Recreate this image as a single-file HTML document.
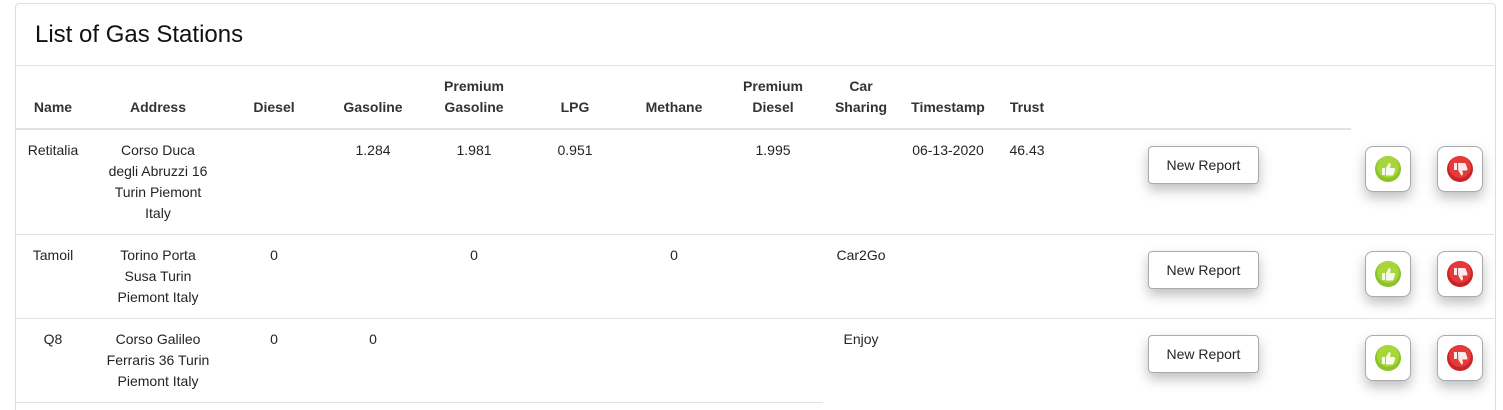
<!DOCTYPE html>
<html style="height:410px;overflow:hidden"><head><style>
body{margin:0;width:1503px;height:410px;background:#fff;font-family:"Liberation Sans",Arial,sans-serif;color:#212529;position:relative;overflow:hidden}
.card{position:absolute;left:15px;top:3px;width:1479px;height:406px;border:1px solid #ddd;border-bottom:none;border-radius:4px 4px 0 0}
.t{position:absolute;font-size:14px;line-height:21px;text-align:center;transform:translateX(-50%);white-space:nowrap}
.h{font-weight:bold;color:#333}
.hl{position:absolute;left:16px;height:1px;background:#dee2e6}
.btn{position:absolute;left:1148px;width:109px;height:36px;border:1px solid #aaa;border-radius:4px;background:#fff;font-size:14px;line-height:36px;text-align:center;box-shadow:0 6px 12px rgba(0,0,0,.25)}
.th{position:absolute;width:44px;height:44px;border:1px solid #aaa;border-radius:8px;background:#fff;box-shadow:0 6px 12px rgba(0,0,0,.25)}
.th svg{position:absolute;left:8px;top:8px}
</style></head><body>
<div class="card"></div>
<div style="position:absolute;left:35px;top:21px;font-size:24px;color:#111">List of Gas Stations</div>
<div class="hl" style="top:65px;width:1478px"></div>
<div class="hl" style="top:128px;width:1335px;height:2px"></div>
<div class="hl" style="top:234px;width:1478px"></div>
<div class="hl" style="top:318px;width:1478px"></div>
<div class="hl" style="top:402px;width:807px"></div>

<div class="t h" style="left:53px;top:97px">Name</div>
<div class="t h" style="left:158px;top:97px">Address</div>
<div class="t h" style="left:274px;top:97px">Diesel</div>
<div class="t h" style="left:373px;top:97px">Gasoline</div>
<div class="t h" style="left:474px;top:76px">Premium<br>Gasoline</div>
<div class="t h" style="left:575px;top:97px">LPG</div>
<div class="t h" style="left:674px;top:97px">Methane</div>
<div class="t h" style="left:773px;top:76px">Premium<br>Diesel</div>
<div class="t h" style="left:861px;top:76px">Car<br>Sharing</div>
<div class="t h" style="left:948px;top:97px">Timestamp</div>
<div class="t h" style="left:1027px;top:97px">Trust</div>

<div class="t" style="left:53px;top:140px">Retitalia</div>
<div class="t" style="left:158px;top:140px">Corso Duca<br>degli Abruzzi 16<br>Turin Piemont<br>Italy</div>
<div class="t" style="left:373px;top:140px">1.284</div>
<div class="t" style="left:474px;top:140px">1.981</div>
<div class="t" style="left:575px;top:140px">0.951</div>
<div class="t" style="left:773px;top:140px">1.995</div>
<div class="t" style="left:948px;top:140px">06-13-2020</div>
<div class="t" style="left:1027px;top:140px">46.43</div>

<div class="t" style="left:53px;top:245px">Tamoil</div>
<div class="t" style="left:158px;top:245px">Torino Porta<br>Susa Turin<br>Piemont Italy</div>
<div class="t" style="left:274px;top:245px">0</div>
<div class="t" style="left:474px;top:245px">0</div>
<div class="t" style="left:674px;top:245px">0</div>
<div class="t" style="left:861px;top:245px">Car2Go</div>

<div class="t" style="left:53px;top:329px">Q8</div>
<div class="t" style="left:158px;top:329px">Corso Galileo<br>Ferraris 36 Turin<br>Piemont Italy</div>
<div class="t" style="left:274px;top:329px">0</div>
<div class="t" style="left:373px;top:329px">0</div>
<div class="t" style="left:861px;top:329px">Enjoy</div>

<div class="btn" style="top:146px">New Report</div>
<div class="btn" style="top:251px">New Report</div>
<div class="btn" style="top:335px">New Report</div>

<svg width="0" height="0" style="position:absolute"><defs>
<g id="up"><circle cx="14" cy="14" r="13" fill="#8cc22a"/><circle cx="14" cy="12" r="11" fill="#a6d63a"/><path d="M8 13h3v7H8zM12 13l3-5c1 0 2 1 1.5 3l-.5 2h4c1 0 1.5 1 1 2l-1.5 4.5c-.3.8-1 1-1.8 1H12z" fill="#fff" opacity=".9"/></g>
<g id="dn"><circle cx="14" cy="14" r="13" fill="#c8252a"/><circle cx="14" cy="12" r="11" fill="#e63a3a"/><path d="M8 8h3v7H8zM12 8h6c.8 0 1.5.2 1.8 1L21.3 13.5c.5 1 0 2-1 2h-4l.5 2c.5 2-.5 3-1.5 3l-3-5z" fill="#fff" opacity=".9"/></g>
</defs></svg>
<div class="th" style="left:1365px;top:146px"><svg width="28" height="28"><use href="#up"/></svg></div>
<div class="th" style="left:1437px;top:146px"><svg width="28" height="28"><use href="#dn"/></svg></div>
<div class="th" style="left:1365px;top:251px"><svg width="28" height="28"><use href="#up"/></svg></div>
<div class="th" style="left:1437px;top:251px"><svg width="28" height="28"><use href="#dn"/></svg></div>
<div class="th" style="left:1365px;top:335px"><svg width="28" height="28"><use href="#up"/></svg></div>
<div class="th" style="left:1437px;top:335px"><svg width="28" height="28"><use href="#dn"/></svg></div>
</body></html>
